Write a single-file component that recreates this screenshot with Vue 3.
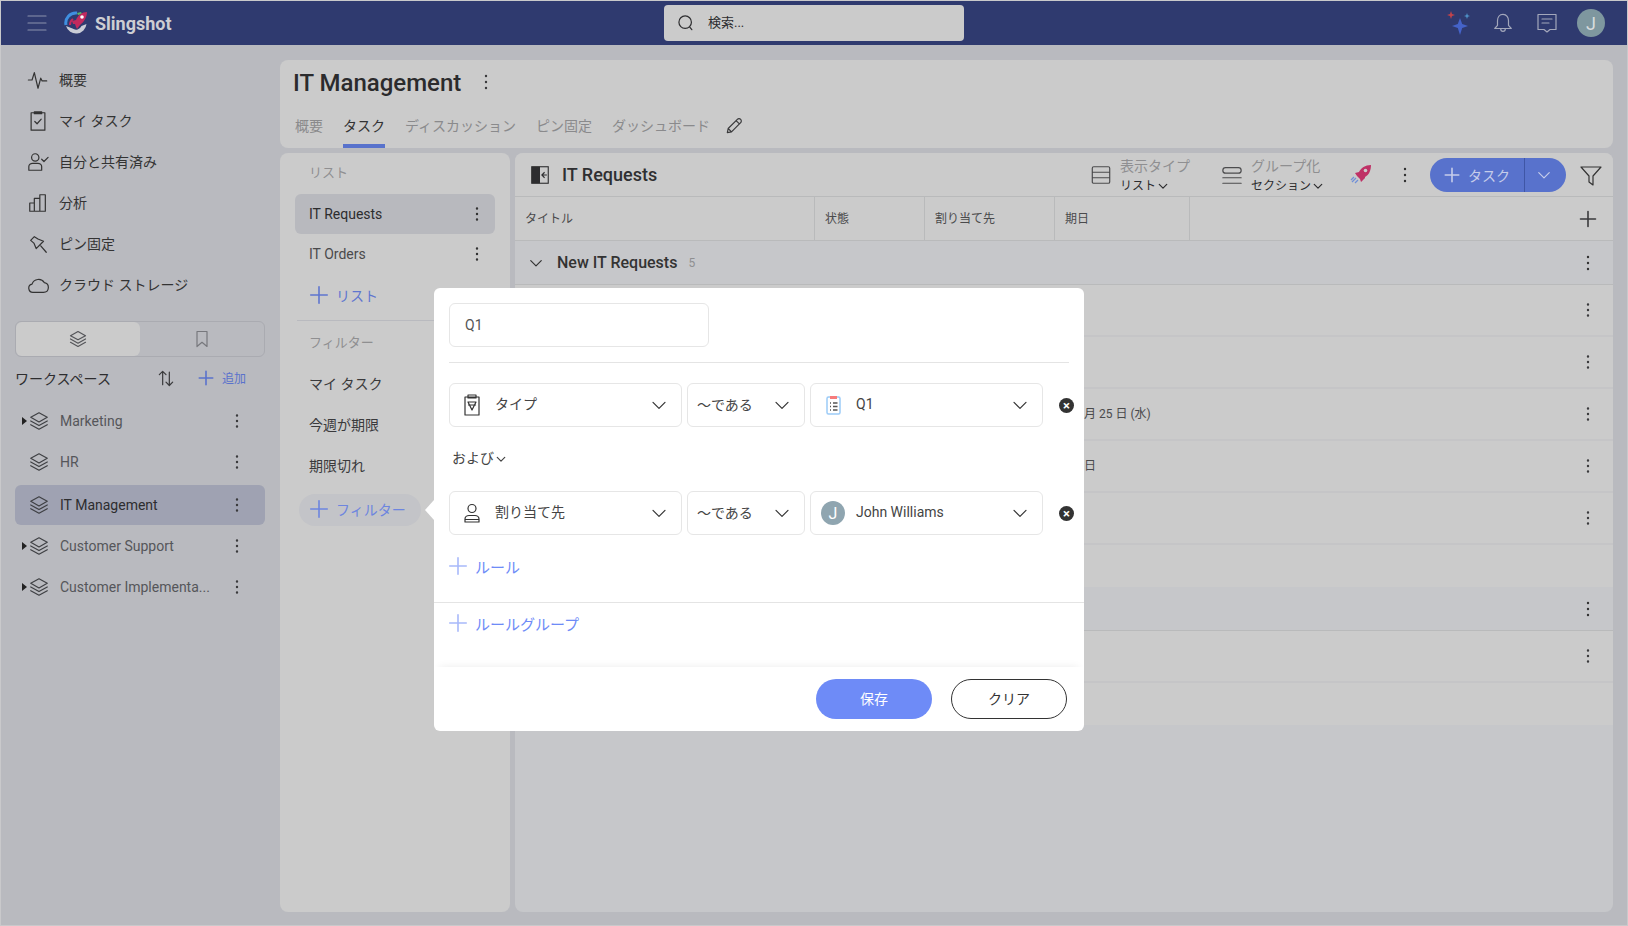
<template>
  <div class="app">
    <header class="nav">
      <Icon name="menu" :size="24" class="nav-menu" />
      <svg class="logo" width="24" height="24" viewBox="0 0 24 24">
        <path d="M2 14A10 10 0 0 1 13 2" fill="none" stroke="#3f8fe0" stroke-width="3" />
        <path d="M6 14A7 7 0 0 1 9 8" fill="none" stroke="#c22a5e" stroke-width="2" />
        <path d="M2 15A10.500 10.500 0 0 0 22.500 13l-5 2a6 6 0 0 1-9 2.500z" fill="#c9ccd6" />
        <path d="M13 2l4-1 1 2-4 1z" fill="#5ab56a" />
        <path d="M23 1c-5 0-9 3-11 8l-4 1 1 3 2 0 1 3 1 2 3-4c4-3 7-8 7-13z" fill="#c22a5e" />
        <circle cx="18" cy="6" r="1.800" fill="#fff" />
      </svg>
      <span class="brand">Slingshot</span>
      <div class="search">
        <Icon name="search" :size="20" />
        <span>検索...</span>
      </div>
      <div class="nav-right">
        <svg width="24" height="24" viewBox="0 0 24 24">
          <path d="M13 7l2.200 6 5.800 2-5.800 2L13 24l-2.200-7-5.800-2 5.800-2z" fill="#4563c9" />
          <path d="M4 0l1 3 3 1-3 1-1 3-1-3-3-1 3-1z" fill="#c2434b" />
          <path d="M20 2l.8 2.200L23 5l-2.200.8L20 8l-.8-2.200L17 5l2.200-.8z" fill="#4f93c9" />
        </svg>
        <Icon name="bell" :size="22" class="nav-ic" />
        <Icon name="chat" :size="24" class="nav-ic nav-chat" />
        <span class="avatar big">J</span>
      </div>
    </header>

    <div class="body">
      <aside class="side">
        <a v-for="m in sideLinks" :key="m.label" class="side-link">
          <Icon :name="m.icon" :size="22" />
          <span>{{ m.label }}</span>
        </a>

        <div class="segment">
          <span class="seg on"><Icon name="layers" :size="20" /></span>
          <span class="seg"><Icon name="bookmark" :size="20" /></span>
        </div>

        <div class="ws-head">
          <span class="ws-title">ワークスペース</span>
          <Icon name="sort" :size="20" class="ws-sort" />
          <Icon name="plus" :size="18" class="ws-plus" />
          <span class="ws-add">追加</span>
        </div>

        <ul class="tree">
          <li v-for="w in workspaces" :key="w.name" :class="['tree-item', { active: w.active }]">
            <span class="arrow" :class="{ hidden: !w.children }"></span>
            <Icon name="layers" :size="22" />
            <span class="tree-name">{{ w.name }}</span>
            <Icon name="kebab" :size="22" class="tree-kebab" />
          </li>
        </ul>
      </aside>

      <main class="content">
        <section class="card head-card">
          <div class="title-row">
            <h1>IT Management</h1>
            <Icon name="kebab" :size="24" />
          </div>
          <div class="tabs">
            <span v-for="t in tabs" :key="t" :class="['tab', { on: t === 'タスク' }]">{{ t }}</span>
            <Icon name="pencil" :size="20" class="tab-edit" />
          </div>
        </section>

        <div class="lower">
          <section class="card lists">
            <div class="list-label">リスト</div>
            <div class="list-item on">IT Requests<Icon name="kebab" :size="22" /></div>
            <div class="list-item">IT Orders<Icon name="kebab" :size="22" /></div>
            <div class="list-add"><Icon name="plus" :size="22" />リスト</div>
            <div class="list-line"></div>
            <div class="list-label">フィルター</div>
            <div v-for="f in filters" :key="f" class="filter-item">{{ f }}</div>
            <div class="filter-pill"><Icon name="plus" :size="22" />フィルター</div>
          </section>

          <section class="card board">
            <div class="toolbar">
              <svg class="panel-ic" width="22" height="22" viewBox="0 0 24 24">
                <rect x="3" y="3" width="18" height="18" fill="none" stroke="#2d2d2f" stroke-width="1.200" />
                <rect x="3" y="3" width="9" height="18" fill="#2d2d2f" />
                <path d="M14 12h5.500M17 9l-3 3 3 3" fill="none" stroke="#2d2d2f" stroke-width="1.200" />
              </svg>
              <h2>IT Requests</h2>
              <div class="tool">
                <Icon name="rows" :size="22" />
                <div class="tool-text">
                  <span class="tool-top">表示タイプ</span>
                  <span class="tool-sub">リスト<Icon name="chevron" :size="10" /></span>
                </div>
              </div>
              <div class="tool second">
                <Icon name="sections" :size="22" />
                <div class="tool-text">
                  <span class="tool-top">グループ化</span>
                  <span class="tool-sub">セクション<Icon name="chevron" :size="10" /></span>
                </div>
              </div>
              <svg class="rocket" width="22" height="22" viewBox="0 0 22 22">
                <path d="M21 1c-6 0-10 3-12 7l-4 1 2 3 3 3 1 3 3-3c1-.5 1-1 1-2 4-2 6-7 6-12z" fill="#bf3166" />
                <circle cx="15.500" cy="6.500" r="1.800" fill="#cbcbcb" />
                <path d="M6 14l-4 4M8 16l-3 3M4 13l-3 3" stroke="#6f8fd8" stroke-width="1.200" fill="none" />
              </svg>
              <Icon name="kebab" :size="24" class="tool-kebab" />
              <div class="add-btn">
                <span class="add-main"><Icon name="plus" :size="18" />タスク</span>
                <span class="add-drop"><Icon name="chevron" :size="14" /></span>
              </div>
              <Icon name="filter" :size="24" class="tool-filter" />
            </div>

            <div class="thead">
              <span class="th t1">タイトル</span>
              <span class="th t2">状態</span>
              <span class="th t3">割り当て先</span>
              <span class="th t4">期日</span>
              <span class="th t5"><Icon name="plus" :size="20" /></span>
            </div>

            <div class="group">
              <Icon name="chevron" :size="14" class="group-chev" />
              <b>New IT Requests</b><em>5</em>
              <Icon name="kebab" :size="24" class="row-kebab" />
            </div>
            <div v-for="r in rows" :key="r.id" class="row">
              <span class="row-date">{{ r.date }}</span>
              <Icon name="kebab" :size="22" class="row-kebab" />
            </div>
            <div class="row-add"></div>
            <div class="group">
              <Icon name="kebab" :size="24" class="row-kebab" />
            </div>
            <div class="row"><Icon name="kebab" :size="22" class="row-kebab" /></div>
            <div class="row-add"></div>
          </section>
        </div>
      </main>
    </div>

    <div class="popup">
      <span class="popup-caret"></span>
      <div class="q-input">Q1</div>
      <div class="popup-line"></div>

      <div class="rule first">
        <div class="sel s1">
          <Icon name="typeClip" :size="24" />
          <span>タイプ</span>
          <Icon name="chevron" :size="16" class="sel-chev" />
        </div>
        <div class="sel s2">
          <span>～である</span>
          <Icon name="chevron" :size="16" class="sel-chev" />
        </div>
        <div class="sel s3">
          <svg width="24" height="24" viewBox="0 0 24 24">
            <rect x="6" y="4" width="13" height="17" rx="1.500" fill="#fff" stroke="#9ccbf7" stroke-width="1.500" />
            <path d="M9 3h7v3H9z" fill="#f77c7c" />
            <path d="M9 10h1M9 13.500h1M9 17h1M12 10h4.500M12 13.500h4.500M12 17h4.500" stroke="#555" stroke-width="1.300" />
          </svg>
          <span>Q1</span>
          <Icon name="chevron" :size="16" class="sel-chev" />
        </div>
        <span class="rule-x">×</span>
      </div>

      <div class="join"><span>および</span><Icon name="chevron" :size="10" /></div>

      <div class="rule">
        <div class="sel s1">
          <Icon name="user" :size="24" />
          <span>割り当て先</span>
          <Icon name="chevron" :size="16" class="sel-chev" />
        </div>
        <div class="sel s2">
          <span>～である</span>
          <Icon name="chevron" :size="16" class="sel-chev" />
        </div>
        <div class="sel s3">
          <span class="avatar">J</span>
          <span>John Williams</span>
          <Icon name="chevron" :size="16" class="sel-chev" />
        </div>
        <span class="rule-x">×</span>
      </div>

      <div class="blue-add rule-add"><Icon name="plus" :size="22" />ルール</div>
      <div class="popup-full-line"></div>
      <div class="blue-add"><Icon name="plus" :size="22" />ルールグループ</div>

      <div class="popup-foot">
        <button class="btn save">保存</button>
        <button class="btn clear">クリア</button>
      </div>
    </div>
  </div>
</template>

<script setup>
import { h } from "vue";

const iconPaths = {
  menu: ["M3 5h18M3 12h18M3 19h18"],
  search: ["M11 3.500a7.500 7.500 0 1 0 0 15 7.500 7.500 0 0 0 0-15zM16.500 17l2.500 3"],
  bell: ["M12 2.500c-4 0-6 3.500-6 7v5l-3 3.500h18l-3-3.500v-5c0-3.500-2-7-6-7zM9.500 18.500c0 3.500 5 3.500 5 0"],
  chat: ["M3 3.500h18v15h-6l-3 2.500-3-2.500H3zM7 8h10M7 12h7"],
  pulse: ["M1.500 12h4l2.500-8 4 17 3-11 1.500 3h5"],
  task: ["M4.500 3h15v19h-15zM8 2h8v2H8zM8.500 12.500l2.500 2.500 4.500-5"],
  shared: ["M9 3a4 4 0 1 0 0 8 4 4 0 0 0 0-8zM2 21v-4c0-2 2-3.500 4-3.500h6c2 0 4 1.500 4 3.500v4zM16 9l2.500 2.500L23 7"],
  chart: ["M3 21V12h5v9zM8 21V7h6v14zM14 21V3h6v18zM3 21h17"],
  pin: ["M8 4L4 8l3.500 3L10 17l8-8-6-2.500zM15 14l6 7"],
  cloud: ["M6.500 20a4.500 4.500 0 0 1-1-8.900A7.500 7.500 0 0 1 19 9.500 5.300 5.300 0 0 1 18 20z"],
  layers: [
    "M12 3l9 5-9 5-9-5z",
    "M3 12l9 5 9-5",
    "M3 16l9 5 9-5",
  ],
  bookmark: ["M6 3h12v18l-6-5-6 5z"],
  sort: ["M8 20V4M4 8l4-4 4 4M16 5v16M12 17l4 4 4-4"],
  plus: ["M12 3v18M3 12h18"],
  kebab: ["M12 6v.01M12 12v.01M12 18v.01"],
  pencil: ["M4 20l1-5L16 4c1-1 3-1 4 0s1 3 0 4L9 19zM14.500 5.500l4 4M5 15l4 4"],
  rows: ["M4 3h16a1.500 1.500 0 0 1 1.500 1.500v15A1.500 1.500 0 0 1 20 21H4a1.500 1.500 0 0 1-1.500-1.500v-15A1.500 1.500 0 0 1 4 3zM2.500 9h19M2.500 15h19"],
  sections: ["M5 4h14a3 3 0 0 1 0 6H5a3 3 0 0 1 0-6zM2 15h20M2 21h20"],
  chevron: ["M3 8l9 9 9-9"],
  filter: ["M2 4h20l-8 9v9l-4-3v-6z"],
  typeClip: ["M5 4h14v18H5zM8 2h8v3H8zM8 9h8l-4 8zM8.500 12h7"],
  user: ["M12 3.500a4 4 0 1 0 0 8 4 4 0 0 0 0-8zM5 21v-3c0-2 2-3.500 4-3.500h6c2 0 4 1.500 4 3.500v3zM5 18.500h14"],
};

const strokeWidths = { kebab: 2.4, plus: 1.6 };

// 图标统一走这里
const Icon = (props) =>
  h(
    "svg",
    {
      class: "ic",
      width: props.size,
      height: props.size,
      viewBox: "0 0 24 24",
      "stroke-width": strokeWidths[props.name] || 1.2,
    },
    iconPaths[props.name].map((d) => h("path", { d, "vector-effect": "non-scaling-stroke" }))
  );
Icon.props = ["name", "size"];

const sideLinks = [
  { icon: "pulse", label: "概要" },
  { icon: "task", label: "マイ タスク" },
  { icon: "shared", label: "自分と共有済み" },
  { icon: "chart", label: "分析" },
  { icon: "pin", label: "ピン固定" },
  { icon: "cloud", label: "クラウド ストレージ" },
];

const workspaces = [
  { name: "Marketing", children: true },
  { name: "HR" },
  { name: "IT Management", active: true },
  { name: "Customer Support", children: true },
  { name: "Customer Implementa...", children: true },
];

const tabs = ["概要", "タスク", "ディスカッション", "ピン固定", "ダッシュボード"];
const filters = ["マイ タスク", "今週が期限", "期限切れ"];

const rows = [
  { id: 1, date: "" },
  { id: 2, date: "" },
  { id: 3, date: "月 25 日 (水)" },
  { id: 4, date: "日" },
  { id: 5, date: "" },
];
</script>

<style scoped>
.app {
  position: relative;
  width: 1628px;
  height: 926px;
  box-sizing: border-box;
  border: 1px solid #c9c9cb;
  background: #b9babf;
  display: flex;
  flex-direction: column;
  overflow: hidden;
  font-family: Roboto, "Noto Sans CJK JP", sans-serif;
  font-size: 14px;
  color: #3a3a3c;
}

.ic {
  fill: none;
  stroke: currentColor;
  stroke-linecap: round;
  stroke-linejoin: round;
  flex: none;
}

.nav {
  height: 44px;
  flex: none;
  background: #2f3a6f;
  display: flex;
  align-items: center;
  position: relative;
  color: #c3c4cc;
}

.nav-menu {
  margin-left: 24px;
  color: #8b91ad;
}

.logo {
  margin-left: 15px;
}

.brand {
  margin-left: 7px;
  font-size: 18px;
  font-weight: 700;
  color: #cdced3;
}

.search {
  position: absolute;
  left: 663px;
  top: 4px;
  width: 300px;
  height: 36px;
  box-sizing: border-box;
  border-radius: 4px;
  background: #cbcbcb;
  color: #2d2d2f;
  display: flex;
  align-items: center;
  gap: 12px;
  padding-left: 12px;
  font-size: 13px;
}

.search span {
  padding-bottom: 3px;
}

.nav-right {
  margin-left: auto;
  display: flex;
  align-items: center;
  margin-right: 22px;
  gap: 21px;
}

.nav-ic {
  color: #a3a7bb;
}

.nav-chat {
  margin-right: -3px;
}

.avatar {
  width: 24px;
  height: 24px;
  border-radius: 50%;
  background: #8fa5b0;
  color: #fff;
  display: flex;
  align-items: center;
  justify-content: center;
  font-size: 16px;
  flex: none;
}

.avatar.big {
  width: 28px;
  height: 28px;
  background: #7e979f;
  color: #d8dcdd;
  font-size: 18px;
}

.body {
  flex: 1;
  display: flex;
  min-height: 0;
}

.side {
  width: 279px;
  flex: none;
  box-sizing: border-box;
  padding: 15px 14px 0 14px;
  display: flex;
  flex-direction: column;
}

.side-link {
  height: 41px;
  box-sizing: border-box;
  padding: 0 0 2px 12px;
  display: flex;
  align-items: center;
  gap: 10px;
  color: #333;
}

.side-link span {
  padding-bottom: 2px;
}

.segment {
  margin: 15px 15px 0 0;
  height: 36px;
  border: 1px solid #aaabb1;
  box-sizing: border-box;
  border-radius: 6px;
  display: flex;
  width: 250px;
}

.seg {
  flex: 1;
  display: flex;
  align-items: center;
  justify-content: center;
  color: #77787d;
}

.seg.on {
  background: #cbcbcb;
  color: #55565a;
  border-radius: 6px;
}

.ws-head {
  height: 36px;
  box-sizing: border-box;
  margin-top: 4px;
  padding-bottom: 3px;
  display: flex;
  align-items: center;
}

.ws-title {
  color: #2d2d2f;
  width: 141px;
}

.ws-sort {
  color: #3a3a3c;
}

.ws-plus {
  margin-left: 21px;
  color: #5a72cc;
}

.ws-add {
  margin-left: 7px;
  font-size: 12px;
  color: #5a72cc;
}

.tree {
  list-style: none;
  margin: 4px 0 0;
  padding: 0;
  width: 250px;
  display: flex;
  flex-direction: column;
  gap: 1px;
}

.tree-item {
  height: 40px;
  border-radius: 6px;
  display: flex;
  align-items: center;
  color: #55565a;
  padding-left: 7px;
}

.tree-item.active {
  margin-top: 2px;
  background: #9fa2b2;
  color: #2d2d2f;
}

.tree-item .ic:first-of-type {
  color: #3f4044;
}

.arrow {
  width: 0;
  height: 0;
  border-style: solid;
  border-width: 4px 0 4px 5px;
  border-color: transparent transparent transparent #222;
  margin-right: 1px;
}

.arrow.hidden {
  border-color: transparent;
}

.tree-name {
  margin-left: 10px;
  flex: 1;
}

.tree-kebab {
  margin-right: 17px;
  color: #3a3a3c;
}

.content {
  flex: 1;
  min-width: 0;
  padding: 15px 14px 13px 0;
  display: flex;
  flex-direction: column;
  gap: 5px;
}

.card {
  background: #cbcbcb;
  border-radius: 8px;
}

.head-card {
  height: 88px;
  flex: none;
  box-sizing: border-box;
  padding-left: 15px;
}

.title-row {
  height: 44px;
  display: flex;
  align-items: center;
  gap: 13px;
}

h1 {
  margin: 0 0 0 -2px;
  padding-top: 1px;
  font-size: 24px;
  font-weight: 500;
  color: #2b2b2d;
}

.tabs {
  height: 44px;
  display: flex;
  gap: 20px;
  align-items: stretch;
}

.tab {
  color: #8a8a8c;
  display: flex;
  align-items: center;
  box-sizing: border-box;
  border-bottom: 4px solid transparent;
  border-top: 2px solid transparent;
}

.tab.on {
  color: #333;
  border-bottom-color: #5872cc;
}

.tab-edit {
  align-self: center;
  margin-left: -6px;
  color: #3a3a3c;
}

.lower {
  flex: 1;
  display: flex;
  gap: 5px;
  min-height: 0;
}

.lists {
  width: 230px;
  flex: none;
  overflow: hidden;
}

.list-label {
  height: 41px;
  box-sizing: border-box;
  padding: 0 0 4px 29px;
  display: flex;
  align-items: center;
  font-size: 13px;
  color: #8f8f91;
}

.list-item {
  height: 40px;
  margin: 0 15px;
  padding: 0 7px 0 14px;
  border-radius: 6px;
  display: flex;
  align-items: center;
  justify-content: space-between;
  color: #4a4a4c;
}

.list-item.on {
  background: #b8b9be;
  color: #2d2d2f;
}

.list-item .ic {
  color: #333;
}

.list-add {
  height: 40px;
  box-sizing: border-box;
  margin-top: 3px;
  padding: 0 0 4px 28px;
  display: flex;
  align-items: center;
  gap: 6px;
  font-size: 14px;
  color: #5f76cf;
}

.list-line {
  height: 1px;
  margin: 3px 0 2px 17px;
  background: #b9babf;
}

.filter-item {
  height: 41px;
  box-sizing: border-box;
  padding: 0 0 4px 29px;
  display: flex;
  align-items: center;
  color: #3a3a3c;
}

.filter-pill {
  width: 122px;
  height: 32px;
  margin: 7px 0 0 19px;
  padding: 0 0 3px 9px;
  box-sizing: border-box;
  border-radius: 16px;
  background: #c3c4c8;
  color: #6d85df;
  display: flex;
  align-items: center;
  gap: 6px;
  font-size: 14px;
  white-space: nowrap;
}

.board {
  flex: 1;
  min-width: 0;
  background: #c6c7ca;
  overflow: hidden;
  display: flex;
  flex-direction: column;
}

.toolbar {
  height: 44px;
  flex: none;
  box-sizing: border-box;
  background: #cbcbcb;
  border-bottom: 1px solid #b9babb;
  display: flex;
  align-items: center;
  position: relative;
}

.panel-ic {
  margin-left: 14px;
}

h2 {
  margin: 0 0 0 11px;
  font-size: 18px;
  font-weight: 500;
  color: #2f2f31;
  flex: 1;
}

.tool {
  display: flex;
  align-items: center;
  gap: 8px;
  color: #4c4c4e;
  margin-right: 31px;
}

.tool.second {
  margin-right: 27px;
}

.tool-text {
  display: flex;
  flex-direction: column;
  line-height: 20px;
  padding-top: 2px;
}

.tool-top {
  color: #8f8f91;
  font-size: 14px;
}

.tool-sub {
  color: #2d2d2f;
  font-size: 12px;
  display: flex;
  align-items: center;
  gap: 2px;
}

.rocket {
  margin-right: 21px;
}

.tool-kebab {
  margin-right: 13px;
  color: #333;
}

.add-btn {
  width: 136px;
  height: 34px;
  background: #5872cc;
  border-radius: 17px;
  color: #c6cdea;
  display: flex;
  overflow: hidden;
  font-size: 14px;
  margin-right: 13px;
}

.add-main {
  width: 95px;
  box-sizing: border-box;
  border-right: 1px solid #3f56a6;
  display: flex;
  align-items: center;
  gap: 7px;
  padding-left: 13px;
}

.add-drop {
  flex: 1;
  display: flex;
  align-items: center;
  justify-content: center;
  padding-right: 3px;
}

.tool-filter {
  color: #333;
  margin-right: 10px;
}

.thead {
  height: 44px;
  flex: none;
  box-sizing: border-box;
  background: #cbcbcb;
  border-bottom: 1px solid #b9babb;
  display: flex;
  font-size: 12px;
}

.th {
  box-sizing: border-box;
  border-right: 1px solid #b9babb;
  display: flex;
  align-items: center;
  padding: 0 0 2px 10px;
  color: #4a4a4c;
}

.t1 {
  width: 300px;
}

.t2 {
  width: 110px;
}

.t3 {
  width: 130px;
}

.t4 {
  width: 135px;
}

.t5 {
  flex: 1;
  border-right: 0;
  justify-content: flex-end;
  padding: 0 15px 0 0;
  color: #3a3a3c;
}

.group {
  height: 44px;
  flex: none;
  box-sizing: border-box;
  border-bottom: 1px solid #b9babb;
  display: flex;
  align-items: center;
  padding-left: 14px;
}

.group-chev {
  color: #333;
  margin-right: 14px;
}

.group b {
  font-weight: 500;
  font-size: 16px;
  color: #333;
}

.group em {
  font-style: normal;
  font-size: 12px;
  color: #8f8f91;
  margin-left: 11px;
}

.row {
  height: 52px;
  flex: none;
  box-sizing: border-box;
  background: #cbcbcb;
  border-bottom: 2px solid #c5c5c7;
  display: flex;
  align-items: center;
  padding-left: 569px;
}

.row-date {
  font-size: 12px;
  color: #4a4a4c;
  padding-bottom: 4px;
}

.row-kebab {
  margin-left: auto;
  margin-right: 14px;
  color: #3a3a3c;
}

.group .row-kebab {
  margin-right: 13px;
  color: #333;
}

.row-add {
  height: 42px;
  flex: none;
  background: #cbcbcb;
}

.popup {
  position: absolute;
  left: 433px;
  top: 287px;
  width: 650px;
  height: 443px;
  background: #fff;
  border-radius: 6px;
  display: flex;
  flex-direction: column;
  color: #444;
}

.popup-caret {
  position: absolute;
  left: -9px;
  top: 212px;
  width: 0;
  height: 0;
  border-style: solid;
  border-width: 10px 9px 10px 0;
  border-color: transparent #fff transparent transparent;
}

.q-input {
  width: 260px;
  height: 44px;
  flex: none;
  box-sizing: border-box;
  margin: 15px 0 0 15px;
  padding-left: 15px;
  border: 1px solid #e6e6e6;
  border-radius: 6px;
  display: flex;
  align-items: center;
  color: #555;
}

.popup-line {
  height: 1px;
  flex: none;
  margin: 15px 15px 0;
  background: #e4e4e4;
}

.rule {
  display: flex;
  align-items: center;
  gap: 5px;
  margin-left: 15px;
  flex: none;
}

.rule.first {
  margin-top: 20px;
}

.sel {
  height: 44px;
  box-sizing: border-box;
  border: 1px solid #e6e6e6;
  border-radius: 6px;
  display: flex;
  align-items: center;
  gap: 11px;
  padding-left: 10px;
  color: #444;
}

.sel > span:not(.avatar) {
  padding-bottom: 3px;
}

.s1 > span {
  margin-bottom: 2px;
}

.s1,
.s3 {
  width: 233px;
}

.s2 {
  width: 118px;
  padding-left: 9px;
}

.sel .ic {
  color: #333;
}

.sel-chev {
  margin-left: auto;
  margin-right: 14px;
}

.rule-x {
  width: 15px;
  height: 15px;
  margin-left: 11px;
  border-radius: 50%;
  background: #333;
  color: #fff;
  font-size: 13px;
  line-height: 15px;
  text-align: center;
  font-weight: 700;
}

.join {
  height: 64px;
  flex: none;
  margin-left: 18px;
  display: flex;
  align-items: center;
  gap: 2px;
  color: #444;
}

.join span {
  padding-bottom: 4px;
}

.blue-add {
  height: 40px;
  box-sizing: border-box;
  flex: none;
  margin-left: 13px;
  display: flex;
  align-items: center;
  gap: 6px;
  font-size: 15px;
  color: #6e8bf7;
}

.blue-add .ic {
  color: #a8b9fa;
}

.rule-add {
  margin-top: 13px;
  padding-bottom: 4px;
}

.popup-full-line {
  height: 1px;
  flex: none;
  margin-top: 14px;
  background: #e4e4e4;
}

.popup-foot {
  margin-top: auto;
  height: 64px;
  flex: none;
  box-sizing: border-box;
  padding: 12px 17px 0 0;
  display: flex;
  justify-content: flex-end;
  gap: 19px;
  box-shadow: 0 -6px 8px -6px rgba(0, 0, 0, 0.08);
  border-radius: 0 0 6px 6px;
}

.btn {
  width: 116px;
  height: 40px;
  border-radius: 20px;
  padding: 0 0 2px;
  font: inherit;
  cursor: pointer;
}

.save {
  border: 0;
  background: #6e8bf7;
  color: #fff;
}

.clear {
  border: 1px solid #333;
  background: #fff;
  color: #333;
}
</style>
